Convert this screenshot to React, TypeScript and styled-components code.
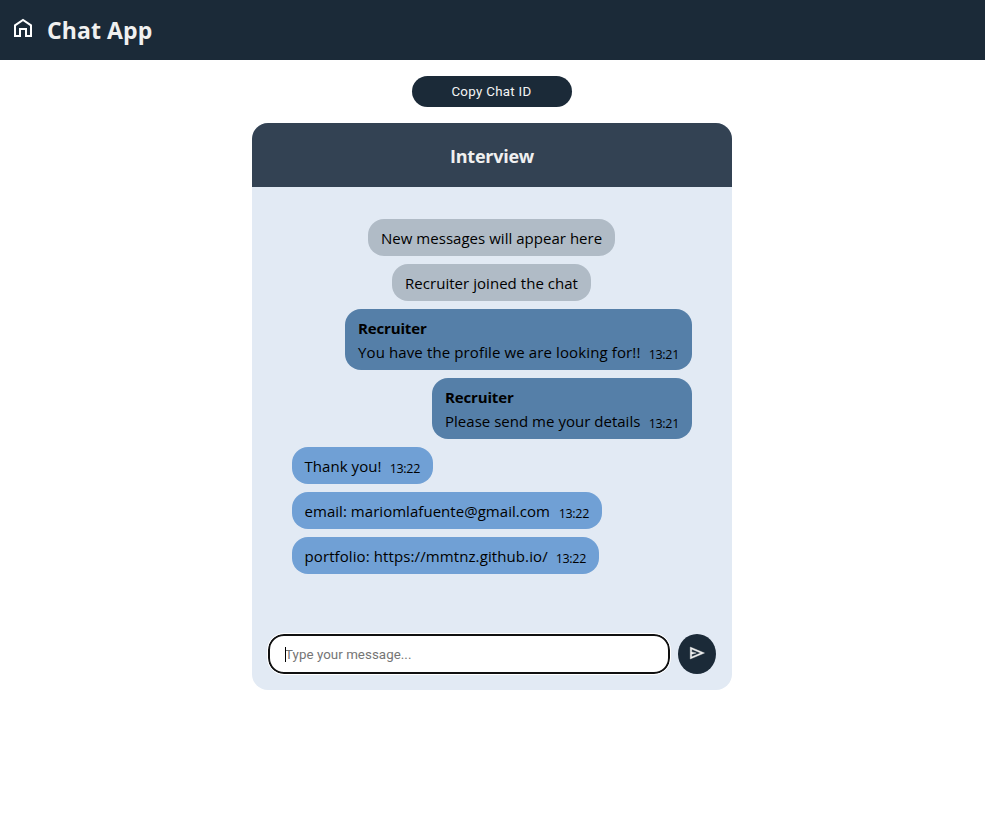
import React from 'react';
import styled, { createGlobalStyle } from 'styled-components';

const GlobalStyle = createGlobalStyle`
  * { box-sizing: border-box; }
  body {
    margin: 0;
    background: #fff;
    color: #000;
    font-family: 'Open Sans', 'Noto Sans', sans-serif;
    font-size: 15px;
  }
`;

const Header = styled.header`
  display: flex;
  align-items: center;
  height: 60px;
  padding-left: 11px;
  background: #1b2a38;
`;

const HomeIcon = styled.svg`
  width: 24px;
  height: 24px;
  margin: -4px 12px 0 0;
  fill: none;
  stroke: #fff;
  stroke-width: 2;
`;

const Title = styled.h1`
  margin: -1px 0 0;
  color: #f0f0f0;
  font-size: 23px;
  line-height: 32px;
  font-weight: 700;
  letter-spacing: 0.1px;
`;

const Main = styled.main`
  display: flex;
  flex-direction: column;
  align-items: center;
  width: 984px;
  padding-top: 16px;
`;

const CopyButton = styled.button`
  width: 160px;
  height: 31px;
  margin-bottom: 16px;
  padding: 0 1px 0 0;
  border: 0;
  border-radius: 16px;
  background: #1b2a38;
  color: #f4f4f4;
  font: 400 13.333px 'Roboto', sans-serif;
  letter-spacing: 0.3px;
`;

const Card = styled.section`
  width: 480px;
  height: 567px;
  display: flex;
  flex-direction: column;
  border-radius: 16px;
  overflow: hidden;
  background: #e2eaf4;
`;

const CardTitle = styled.h2`
  margin: 0;
  height: 64px;
  flex: none;
  background: #334253;
  color: #f0f0f0;
  text-align: center;
  font-size: 18px;
  line-height: 66px;
  letter-spacing: -0.25px;
`;

const Messages = styled.div`
  flex: 1;
  display: flex;
  flex-direction: column;
  gap: 8px;
  padding: 32px 40px 0;
`;

type Kind = 'notice' | 'theirs' | 'mine';
const tone = { notice: '#b0bbc6', theirs: '#557fa8', mine: '#70a0d5' };
const side = { notice: 'center', theirs: 'flex-end', mine: 'flex-start' };

const Bubble = styled.div<{ $kind: Kind; $width: number }>`
  align-self: ${(p) => side[p.$kind]};
  width: ${(p) => p.$width}px;
  margin-right: ${(p) => (p.$kind === 'notice' ? 1 : 0)}px;
  padding: 7px 0 6px ${(p) => (p.$kind === 'mine' ? 12.5 : 13)}px;
  border-radius: 16px;
  background: ${(p) => tone[p.$kind]};
  line-height: 24px;
  white-space: nowrap;
`;

const Sender = styled.div`
  font-weight: 700;
  letter-spacing: -0.15px;
`;

const Line = styled.div`
  display: flex;
  justify-content: space-between;
  padding-right: 13px;
`;

const Text = styled.span<{ $spacing: number }>`
  letter-spacing: ${(p) => p.$spacing}px;
`;

const Time = styled.time`
  font-size: 12.5px;
  line-height: 29px;
  height: 24px;
  letter-spacing: -0.3px;
`;

const Composer = styled.form`
  display: flex;
  gap: 8px;
  padding: 0 16px 16px;
`;

const Field = styled.div`
  position: relative;
`;

const Caret = styled.span`
  position: absolute;
  left: 17px;
  top: 13px;
  width: 1px;
  height: 15px;
  background: #000;
`;

const Input = styled.input`
  display: block;
  width: 402px;
  height: 40px;
  padding: 0 15px;
  border: 2px solid #101010;
  border-radius: 16px;
  outline: 1px solid #fff;
  background: #fff;
  font: 13.333px 'Roboto', sans-serif;
  letter-spacing: 0.05px;
  &::placeholder { color: #757575; opacity: 1; }
`;

const Send = styled.button`
  width: 38px;
  height: 40px;
  display: grid;
  place-items: center;
  padding: 0 0 2px;
  border: 0;
  border-radius: 50%;
  background: #1b2a38;
`;

const SendIcon = styled.svg`
  width: 18px;
  height: 18px;
  fill: #f0f0f0;
  stroke: #f0f0f0;
  stroke-width: 20;
`;

interface Message {
  kind: Kind;
  width: number;
  text: string;
  spacing: number;
  sender?: string;
  time?: string;
}

const messages: Message[] = [
  { kind: 'notice', width: 247, text: 'New messages will appear here', spacing: 0.03 },
  { kind: 'notice', width: 199, text: 'Recruiter joined the chat', spacing: 0.04 },
  { kind: 'theirs', width: 347, sender: 'Recruiter', text: 'You have the profile we are looking for!!', time: '13:21', spacing: 0.12 },
  { kind: 'theirs', width: 260, sender: 'Recruiter', text: 'Please send me your details', time: '13:21', spacing: 0.02 },
  { kind: 'mine', width: 141, text: 'Thank you!', time: '13:22', spacing: 0.05 },
  { kind: 'mine', width: 310, text: 'email: mariomlafuente@gmail.com', time: '13:22', spacing: 0.04 },
  { kind: 'mine', width: 307, text: 'portfolio: https://mmtnz.github.io/', time: '13:22', spacing: 0.1 },
];

export default function App() {
  return (
    <>
      <GlobalStyle />
      <Header>
        <HomeIcon viewBox="0 0 24 24">
          <path d="M4 20V9.4L12 4l8 5.4V20h-5v-7H9v7Z" />
        </HomeIcon>
        <Title>Chat App</Title>
      </Header>
      <Main>
        <CopyButton type="button">Copy Chat ID</CopyButton>
        <Card>
          <CardTitle>Interview</CardTitle>
          <Messages>
            {messages.map((m) => (
              <Bubble key={m.text} $kind={m.kind} $width={m.width}>
                {m.sender && <Sender>{m.sender}</Sender>}
                <Line>
                  <Text $spacing={m.spacing}>{m.text}</Text>
                  {m.time && <Time>{m.time}</Time>}
                </Line>
              </Bubble>
            ))}
          </Messages>
          <Composer>
            <Field>
              <Input placeholder="Type your message..." />
              <Caret />
            </Field>
            <Send type="button" aria-label="Send">
              <SendIcon viewBox="0 -960 960 960">
                <path d="M120-160v-640l760 320-760 320Zm80-120 474-200-474-200v140l240 60-240 60v140Z" />
              </SendIcon>
            </Send>
          </Composer>
        </Card>
      </Main>
    </>
  );
}
